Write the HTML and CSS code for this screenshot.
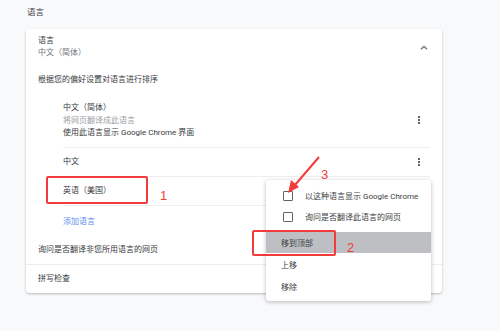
FILE: index.html
```html
<!DOCTYPE html>
<html lang="zh-CN">
<head>
    <meta charset="UTF-8">
    <meta name="viewport" content="width=device-width, initial-scale=1.0">
    <title>语言设置</title>
    <link rel="stylesheet" href="styles.css">
</head>
<body>
    <div class="page">
        <h2 class="section-title">语言</h2>
        <div class="card">
            <div class="card-header">
                <div>
                    <div class="primary">语言</div>
                    <div class="secondary">中文（简体）</div>
                </div>
                <svg class="chevron" width="8" height="5" viewBox="0 0 8 5"><path d="M1 4.2 L4 1.3 L7 4.2" fill="none" stroke="#6b6f74" stroke-width="1.3"/></svg>
            </div>
            <div class="sort-label primary">根据您的偏好设置对语言进行排序</div>
            <div class="lang-list">
                <div class="lang-row tall">
                    <div>
                        <div class="primary">中文（简体）</div>
                        <div class="muted">将网页翻译成此语言</div>
                        <div class="primary">使用此语言显示 Google Chrome 界面</div>
                    </div>
                    <span class="dots"><i></i><i></i><i></i></span>
                </div>
                <div class="lang-row">
                    <div class="primary">中文</div>
                    <span class="dots"><i></i><i></i><i></i></span>
                </div>
                <div class="lang-row">
                    <div class="primary">英语（美国）</div>
                </div>
                <div class="lang-row add">
                    <a class="link">添加语言</a>
                </div>
            </div>
            <div class="card-row primary">询问是否翻译非您所用语言的网页</div>
            <div class="card-row divided primary">拼写检查</div>
        </div>
    </div>

    <div class="menu">
        <div class="menu-item"><span class="checkbox"></span>以这种语言显示 Google Chrome</div>
        <div class="menu-item"><span class="checkbox"></span>询问是否翻译此语言的网页</div>
        <div class="menu-item active">移到顶部</div>
        <div class="menu-item">上移</div>
        <div class="menu-item">移除</div>
    </div>

    <!-- annotations -->
    <div class="mark mark-lang"></div>
    <div class="mark mark-top"></div>
    <span class="num num-1">1</span>
    <span class="num num-2">2</span>
    <span class="num num-3">3</span>
    <svg class="arrow" width="500" height="331" viewBox="0 0 500 331">
        <line x1="319" y1="157" x2="295" y2="185" stroke="#f23b3b" stroke-width="2"/>
        <polygon points="288,193 291,180 299,187" fill="#f23b3b"/>
    </svg>
</body>
</html>
```

FILE: styles.css
```css
body {
    margin: 0;
    background-color: #f8f9fb;
    font-family: Roboto, "Noto Sans CJK SC", sans-serif;
    font-size: 8px;
    color: #3c4043;
    width: 500px;
    height: 331px;
    overflow: hidden;
    position: relative;
}

.page {
    padding: 6px 0 0 26px;
}

.section-title {
    margin: 0 0 10px 1px;
    font-size: 8.5px;
    font-weight: normal;
    line-height: 13px;
    color: #3c4043;
}

.card {
    width: 416px;
    height: 264px;
    background: white;
    border-radius: 3px;
    box-shadow: 0 1px 2px rgba(60, 64, 67, 0.25), 0 1px 3px rgba(60, 64, 67, 0.1);
    box-sizing: border-box;
}

.primary {
    color: #36393d;
    line-height: 12px;
}

.secondary {
    color: #70757a;
    line-height: 12px;
}

.muted {
    color: #9aa0a6;
    line-height: 13px;
}

.card-header {
    display: flex;
    justify-content: space-between;
    align-items: center;
    padding: 6px 14px 0 12px;
}

.chevron {
    margin-top: 0;
}

.sort-label {
    padding: 15px 12px 0;
}

.lang-list {
    margin: 12px 12px 0 37px;
}

.lang-row {
    display: flex;
    justify-content: space-between;
    align-items: center;
    height: 29px;
    border-top: 1px solid #eceef0;
    box-sizing: border-box;
}

.lang-row.tall {
    height: 49px;
    border-top: none;
    align-items: flex-start;
    padding-top: 4px;
}

.lang-row.tall .primary,
.lang-row.tall .muted {
    line-height: 12.5px;
}

.lang-row.tall .dots {
    margin-top: 14px;
}

.lang-row.add {
    height: 30px;
}

.link {
    color: #5a8dee;
}

.dots {
    display: flex;
    flex-direction: column;
    gap: 1px;
    margin-right: 10px;
}

.dots i {
    width: 2px;
    height: 2px;
    background: #5f6368;
}

.card-row {
    height: 29px;
    display: flex;
    align-items: center;
    padding: 0 12px;
    box-sizing: border-box;
}

.card-row.divided {
    border-top: 1px solid #eceef0;
}

.menu {
    position: absolute;
    left: 266px;
    top: 180px;
    width: 165px;
    padding: 5px 0 4px;
    background: white;
    border-radius: 3px;
    box-shadow: 0 1px 4px rgba(60, 64, 67, 0.35);
}

.menu-item {
    display: flex;
    align-items: center;
    height: 21px;
    padding-left: 15px;
    color: #3c4043;
}

.menu-item:nth-child(2) {
    margin-bottom: 5px;
}

.menu-item:nth-child(n+4) {
    height: 22px;
}

.menu-item.active {
    background: #bdbfc3;
}

.checkbox {
    width: 8px;
    height: 8px;
    border: 1.5px solid #5f6368;
    border-radius: 1px;
    margin: 0 12px 0 2px;
}

.mark {
    position: absolute;
    border: 2px solid #f23b3b;
    border-radius: 2px;
    box-sizing: border-box;
}

.mark-lang {
    left: 46px;
    top: 176px;
    width: 102px;
    height: 28px;
}

.mark-top {
    left: 252px;
    top: 230px;
    width: 84px;
    height: 26px;
}

.num {
    position: absolute;
    font-family: "Liberation Sans", Arial, sans-serif;
    font-size: 13px;
    line-height: 13px;
    color: #f23b3b;
}

.num-1 { left: 160px; top: 189px; }
.num-2 { left: 347px; top: 241px; }
.num-3 { left: 321px; top: 168px; }

.arrow {
    position: absolute;
    left: 0;
    top: 0;
}
```
